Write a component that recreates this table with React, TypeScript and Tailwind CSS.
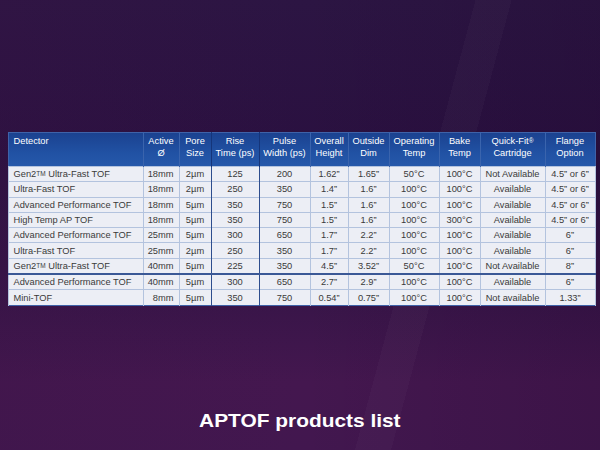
import React from "react";

type Row = string[];

const rows: Row[] = [
  ["Gen2TM Ultra-Fast TOF", "18mm", "2µm", "125", "200", "1.62\u201d", "1.65\u201d", "50°C", "100°C", "Not Available", "4.5\u201d or 6\u201d"],
  ["Ultra-Fast TOF", "18mm", "2µm", "250", "350", "1.4\u201d", "1.6\u201d", "100°C", "100°C", "Available", "4.5\u201d or 6\u201d"],
  ["Advanced Performance TOF", "18mm", "5µm", "350", "750", "1.5\u201d", "1.6\u201d", "100°C", "100°C", "Available", "4.5\u201d or 6\u201d"],
  ["High Temp AP TOF", "18mm", "5µm", "350", "750", "1.5\u201d", "1.6\u201d", "100°C", "300°C", "Available", "4.5\u201d or 6\u201d"],
  ["Advanced Performance TOF", "25mm", "5µm", "300", "650", "1.7\u201d", "2.2\u201d", "100°C", "100°C", "Available", "6\u201d"],
  ["Ultra-Fast TOF", "25mm", "2µm", "250", "350", "1.7\u201d", "2.2\u201d", "100°C", "100°C", "Available", "6\u201d"],
  ["Gen2TM Ultra-Fast TOF", "40mm", "5µm", "225", "350", "4.5\u201d", "3.52\u201d", "50°C", "100°C", "Not Available", "8\u201d"],
  ["Advanced Performance TOF", "40mm", "5µm", "300", "650", "2.7\u201d", "2.9\u201d", "100°C", "100°C", "Available", "6\u201d"],
  ["Mini-TOF", "8mm", "5µm", "350", "750", "0.54\u201d", "0.75\u201d", "100°C", "100°C", "Not available", "1.33\u201d"],
];

const widths = [135, 36, 32, 48, 51, 38, 41, 50, 41, 65, 50];

function Detector({ text }: { text: string }) {
  if (text.startsWith("Gen2TM")) {
    return (
      <>
        Gen2<sup className="text-[6.5px] relative -top-[1px]">TM</sup>
        {text.slice(6)}
      </>
    );
  }
  return <>{text}</>;
}

const headCell =
  "align-top pt-[3px] leading-[11.5px] font-normal text-white border-x border-[#3a64ad] text-center";

export default function App() {
  return (
    <div
      className="w-[600px] h-[450px] flex flex-col items-center overflow-hidden bg-[linear-gradient(105deg,transparent_0%,transparent_66%,rgba(255,255,255,0.025)_66%,rgba(255,255,255,0.025)_71%,transparent_71%),linear-gradient(90deg,rgba(60,20,70,0.25)_0%,rgba(0,0,0,0)_50%,rgba(20,0,30,0.15)_100%),linear-gradient(180deg,#2c1543_0%,#2a1040_35%,#341446_60%,#44174f_85%,#42174f_100%)]"
      style={{ fontFamily: '"Liberation Sans", Arial, sans-serif' }}
    >
      <table className="mt-[132px] ml-[3px] table-fixed border-collapse text-[9.3px] border border-[#3f62a8]">
        <colgroup>
          {widths.map((w, i) => (
            <col key={i} style={{ width: w }} />
          ))}
        </colgroup>
        <thead>
          <tr className="h-[34px] bg-[linear-gradient(180deg,#1b4290_0%,#2152a4_60%,#2659ab_100%)]">
            <th className={headCell + " text-left! pl-[5px] border-l-0"}>Detector</th>
            <th className={headCell}>
              Active
              <br />Ø
            </th>
            <th className={headCell + " border-r-[#15357a]"}>
              Pore
              <br />Size
            </th>
            <th className={headCell + " border-x-[#15357a]"}>
              Rise
              <br />Time (ps)
            </th>
            <th className={headCell + " border-l-[#15357a]"}>
              Pulse
              <br />Width (ps)
            </th>
            <th className={headCell}>
              Overall
              <br />Height
            </th>
            <th className={headCell}>
              Outside
              <br />Dim
            </th>
            <th className={headCell}>
              Operating
              <br />Temp
            </th>
            <th className={headCell}>
              Bake
              <br />Temp
            </th>
            <th className={headCell}>
              Quick-Fit<sup className="text-[6.5px] relative -top-[1px]">®</sup>
              <br />Cartridge
            </th>
            <th className={headCell + " border-r-0"}>
              Flange
              <br />Option
            </th>
          </tr>
        </thead>
        <tbody className="bg-[#eceef5] text-[#3a3a3a]">
          {rows.map((r, ri) => (
            <tr
              key={ri}
              className={
                (ri === 6 ? "h-[16px] border-b-2 border-b-[#3a5896] " : ri >= 7 ? "h-[15.5px] " : "h-[15.3px] ") +
                "border-t border-[#b3c3de]"
              }
            >
              {r.map((c, ci) => (
                <td
                  key={ci}
                  className={
                    "p-0 leading-[14px] whitespace-nowrap border-x " +
                    (ci === 2 || ci === 3
                      ? "border-r-[#2d4d8e] border-l-[#b3c3de] "
                      : ci === 4
                      ? "border-l-[#2d4d8e] border-r-[#b3c3de] "
                      : "border-[#b3c3de] ") +
                    (ci === 3 ? "border-l-[#2d4d8e] " : "") +
                    (ci === 0 ? "text-left pl-[5px]" : ci === 1 ? "text-right pr-[5px]" : "text-center")
                  }
                >
                  {ci === 0 ? <Detector text={c} /> : c}
                </td>
              ))}
            </tr>
          ))}
        </tbody>
      </table>
      <div className="mt-[103px] h-[24px] leading-[24px] text-[18px] font-bold text-white scale-x-[1.16]">
        APTOF products list
      </div>
    </div>
  );
}
